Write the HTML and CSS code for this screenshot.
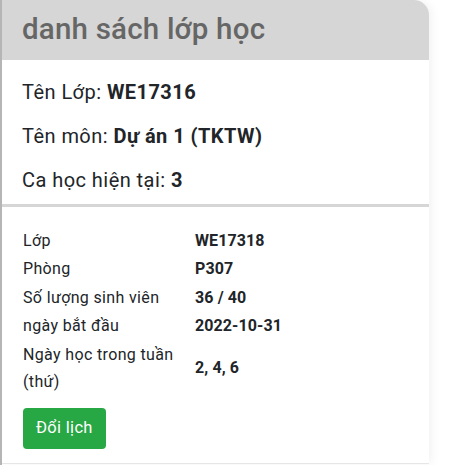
FILE: index.html
```html
<!DOCTYPE html>
<html lang="vi">
<head>
<meta charset="utf-8">
<link rel="stylesheet" href="styles.css">
</head>
<body>
<div class="page">
  <div class="card">
    <div class="card-header">danh sách lớp học</div>
    <div class="info">
      <p class="info-row">Tên Lớp: <b>WE17316</b></p>
      <p class="info-row">Tên môn: <b>Dự án 1 (TKTW)</b></p>
      <p class="info-row">Ca học hiện tại: <b>3</b></p>
    </div>
    <div class="details">
      <table class="detail-table">
        <tr><td class="label">Lớp</td><td class="value">WE17318</td></tr>
        <tr><td class="label">Phòng</td><td class="value">P307</td></tr>
        <tr><td class="label">Số lượng sinh viên</td><td class="value">36 / 40</td></tr>
        <tr><td class="label">ngày bắt đầu</td><td class="value">2022-10-31</td></tr>
        <tr><td class="label">Ngày học trong tuần (thứ)</td><td class="value">2, 4, 6</td></tr>
      </table>
      <button class="btn-change">Đổi lịch</button>
    </div>
  </div>
</div>
</body>
</html>
```
FILE: styles.css
```css
html, body {
  margin: 0;
  padding: 0;
  background: #fff;
}
body {
  font-family: Roboto, "Noto Sans", sans-serif;
  color: #212529;
}
.page {
  border-left: 2px solid #b5b5b5;
  height: 465px;
  box-sizing: border-box;
  overflow: hidden;
}
.card {
  width: 427px;
  background: #fff;
  border-top-right-radius: 15px;
  box-shadow: 3px 0 10px rgba(0, 0, 0, 0.05);
  border-bottom: 1px solid #e6e6e6;
}
.card-header {
  height: 60px;
  background: #d6d6d6;
  border-top-right-radius: 15px;
  color: #666;
  font-size: 29.5px;
  font-weight: 500;
  letter-spacing: 0.2px;
  line-height: 58px;
  padding-left: 20px;
}
.info {
  padding: 20px 20px 12px;
  display: flex;
  flex-direction: column;
  gap: 20px;
  border-bottom: 3px solid #d6d6d6;
}
.info-row {
  margin: 0;
  font-size: 20px;
  letter-spacing: 0.45px;
  line-height: 24px;
}
.info-row b {
  font-weight: 700;
}
.details {
  padding: 19px 21px 14px;
}
.detail-table {
  border-collapse: collapse;
  font-size: 16px;
  letter-spacing: 0.35px;
}
.detail-table td {
  padding: 0.75px 0;
  line-height: 27px;
  vertical-align: middle;
}
.detail-table .label {
  width: 172px;
  padding-right: 0;
}
.detail-table .value {
  font-weight: 700;
  letter-spacing: 0.1px;
}
.btn-change {
  margin-top: 12px;
  display: block;
  height: 41px;
  padding: 0 13px;
  background: #28a745;
  color: #fff;
  border: none;
  border-radius: 4px;
  font-family: Roboto, "Noto Sans", sans-serif;
  font-size: 16.5px;
  letter-spacing: 0.3px;
  line-height: 24px;
}
```
